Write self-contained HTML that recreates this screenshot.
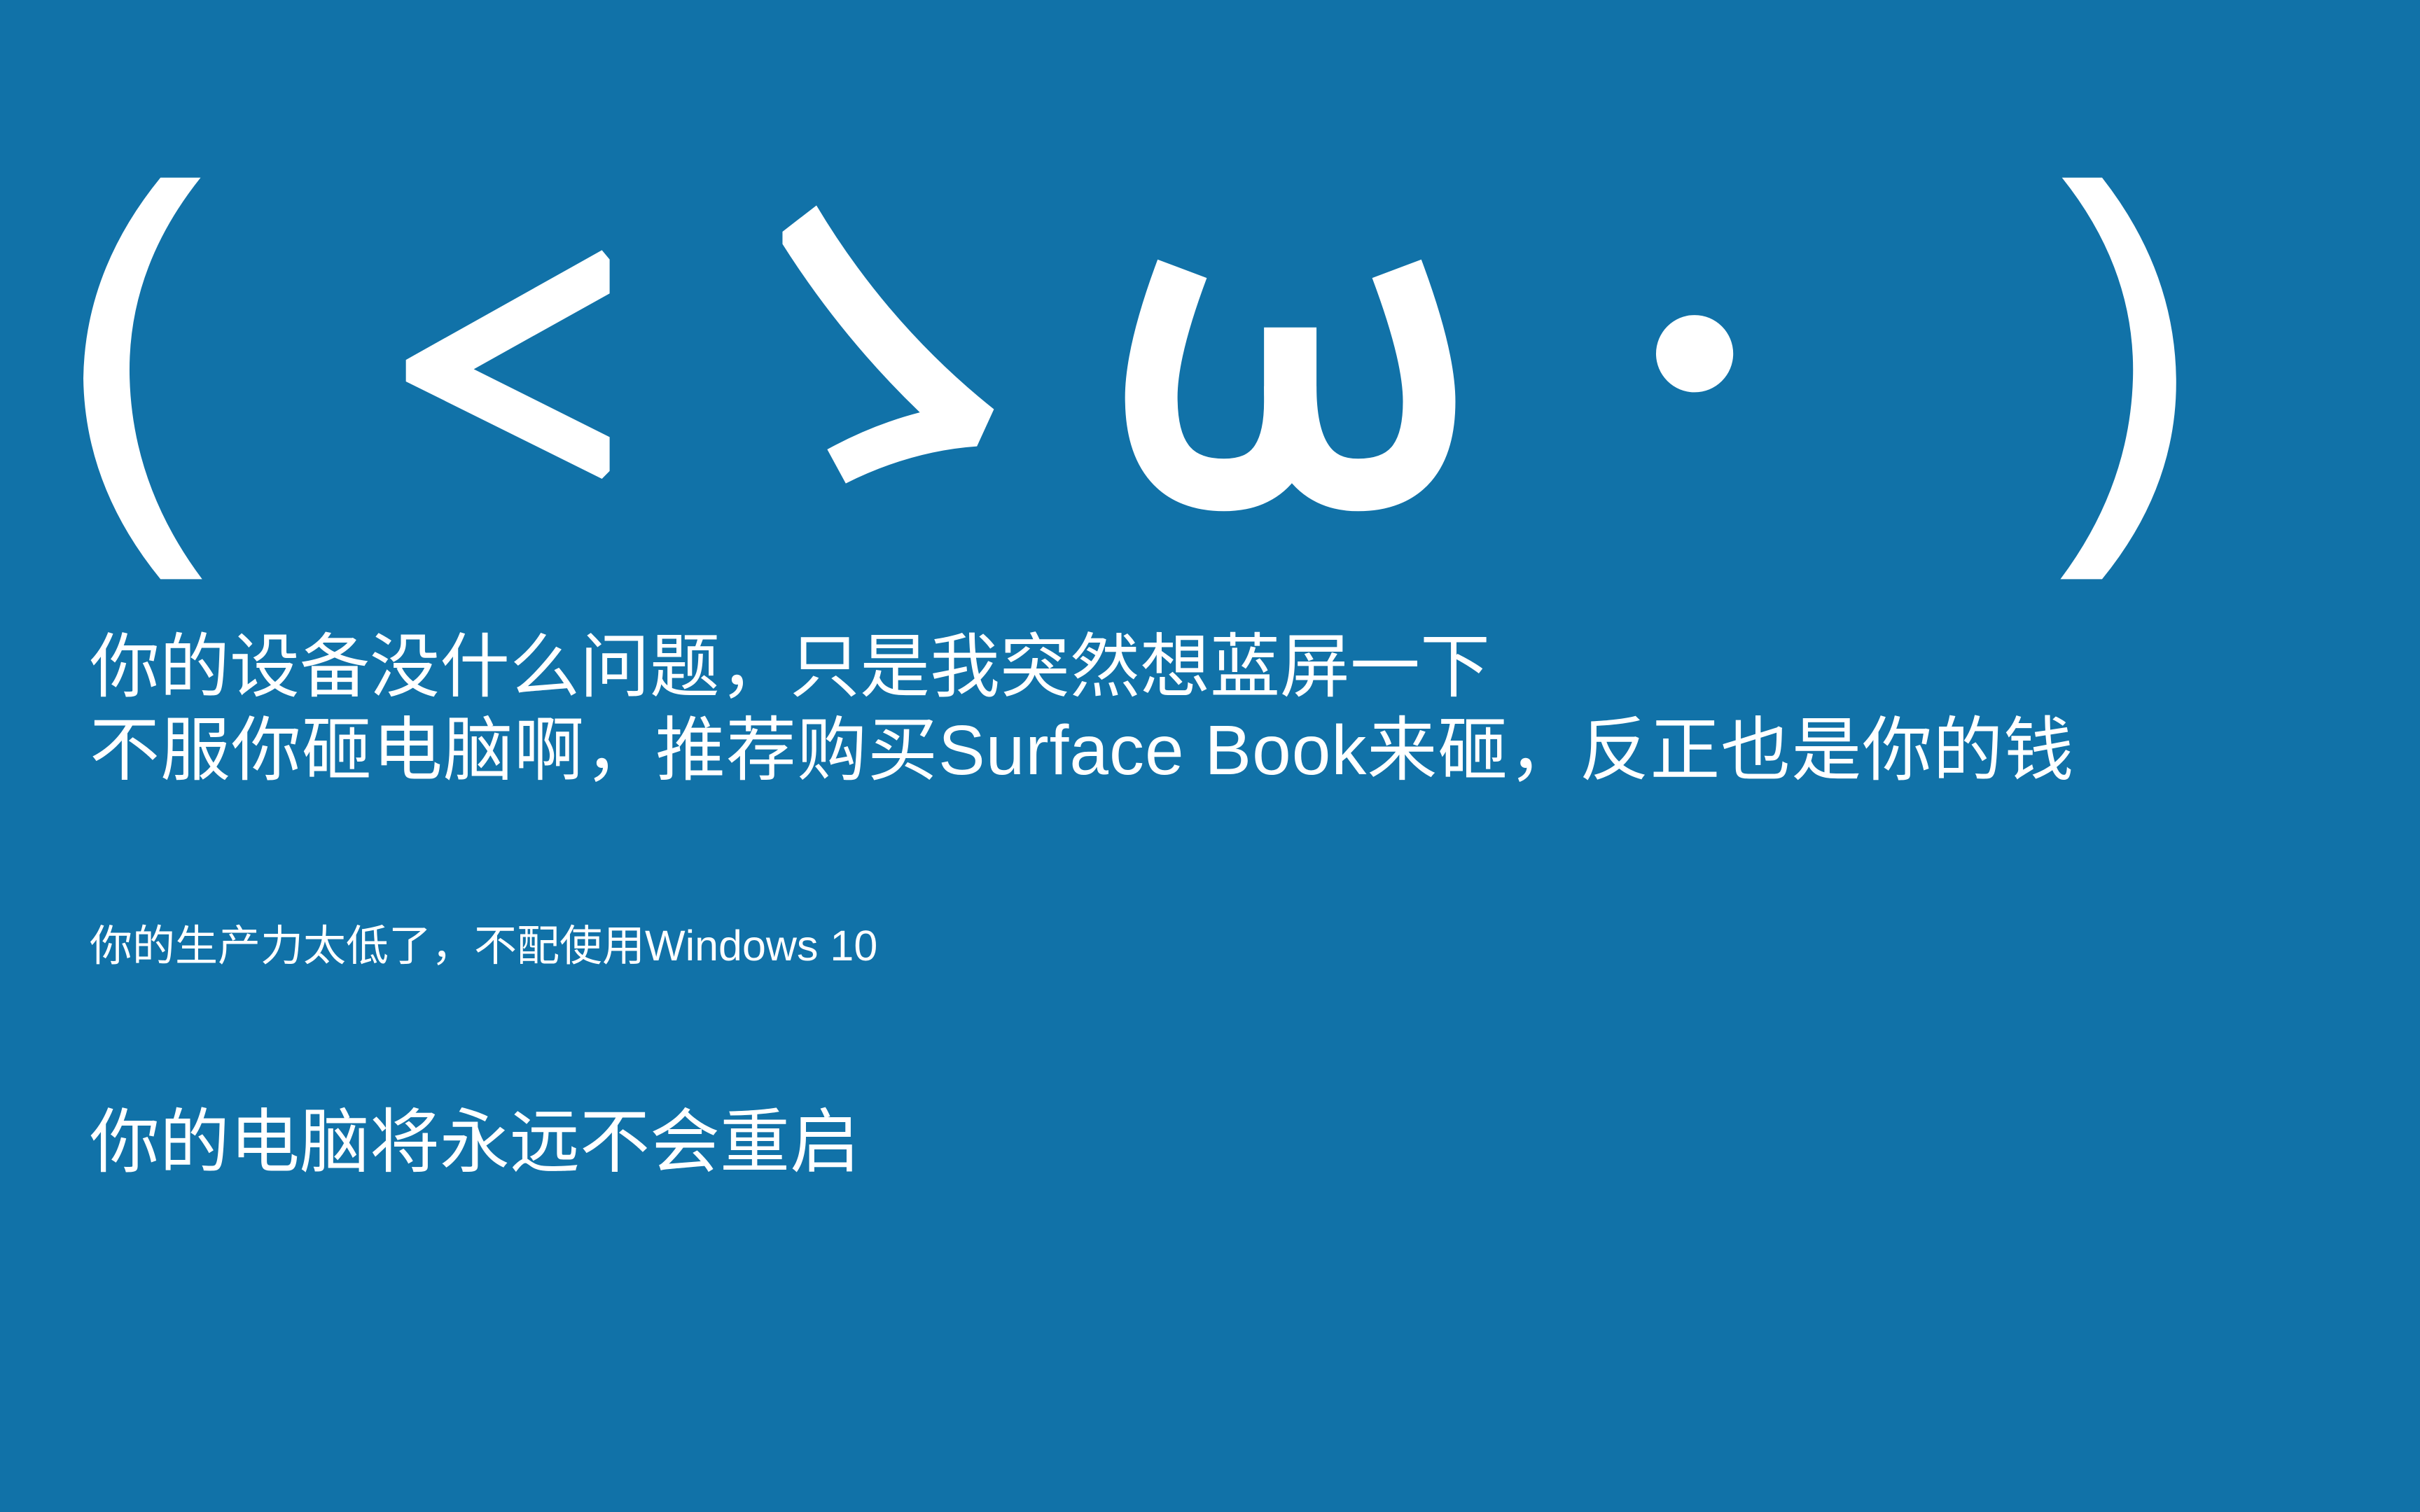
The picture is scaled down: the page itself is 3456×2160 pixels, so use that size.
<!DOCTYPE html>
<html><head><meta charset="utf-8"><style>
html,body{margin:0;padding:0;}
body{width:3456px;height:2160px;background:#1172a8;position:relative;overflow:hidden;font-family:"Liberation Sans","Noto Sans CJK SC",sans-serif;color:#fff;}
.t{position:absolute;left:128px;white-space:nowrap;}
svg{position:absolute;left:0;top:0;}
</style></head><body>
<svg width="3456" height="2160" viewBox="0 0 1568 979" preserveAspectRatio="none">
<g fill="#fff">
<path d="M104,115 L130,115 Q82,175 84,245 Q86,315 131,375 L104,375 Q55,315 54,245 Q55,175 104,115Z"/>
<path d="M1362,115 L1336,115 Q1384,175 1382,245 Q1380,315 1335,375 L1362,375 Q1411,315 1410,245 Q1409,175 1362,115Z"/>
<path d="M390,162 L395,168 L395,190 L307,239 L395,283 L395,305 L390,310 L263,247 L263,233Z"/>
<path d="M507,150 L529,133 Q575,210 644,265 L633,289 Q590,292 548,313 L536,291 Q565,275 596,267 Q545,218 507,158Z"/>
<circle cx="1098" cy="229" r="25"/>
</g>
<g fill="none" stroke="#fff" stroke-width="34">
<path d="M766,174 Q745,230 746,260 Q747,314 793,314 Q836,314 836,260 L836,212"/>
<path d="M836,250 Q836,314 880,314 Q926,314 926,260 Q926,230 905,174"/>
</g>
</svg>
<div class="t" style="top:903px;font-size:100px;line-height:100px;">你的设备没什么问题，只是我突然想蓝屏一下</div>
<div class="t" style="top:1022px;font-size:100px;line-height:100px;letter-spacing:1px;">不服你砸电脑啊，推荐购买Surface Book来砸，反正也是你的钱</div>
<div class="t" style="top:1320px;font-size:61px;line-height:62px;">你的生产力太低了，不配使用Windows 10</div>
<div class="t" style="top:1582px;font-size:100px;line-height:100px;">你的电脑将永远不会重启</div>
</body></html>
